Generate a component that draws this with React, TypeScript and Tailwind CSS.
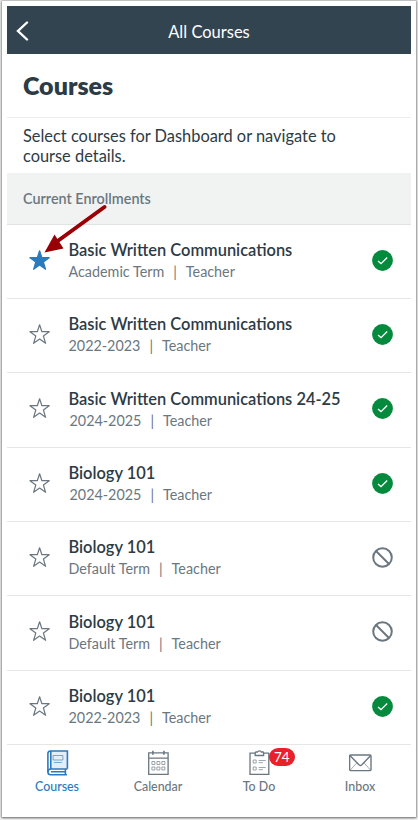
type Course = {
  name: string;
  term: string;
  published: boolean;
  favorite?: boolean;
  inset?: boolean;
};

const courses: Course[] = [
  { name: "Basic Written Communications", term: "Academic Term", published: true, favorite: true },
  { name: "Basic Written Communications", term: "2022-2023", published: true },
  { name: "Basic Written Communications 24-25", term: "2024-2025", published: true, inset: true },
  { name: "Biology 101", term: "2024-2025", published: true, inset: true },
  { name: "Biology 101", term: "Default Term", published: false },
  { name: "Biology 101", term: "Default Term", published: false },
  { name: "Biology 101", term: "2022-2023", published: true },
];

function Star({ filled }: { filled?: boolean }) {
  return (
    <svg
      className={filled ? "w-[22px] h-[22px] shrink-0 text-[#2b7abc]" : "w-[22px] h-[22px] shrink-0 text-[#6b7780]"}
      viewBox="-0.6 0.6 22 22"
      fill={filled ? "currentColor" : "none"}
      stroke="currentColor"
      strokeWidth="1.2"
      strokeLinejoin="round"
    >
      <path d="M11 1.4L13.3 8.3H20.6L14.8 12.6L17 19.9L11 15.6L5 19.9L7.2 12.6L1.4 8.3H8.7Z" />
    </svg>
  );
}

function Published() {
  return (
    <svg className="w-[21px] h-[21px] shrink-0" viewBox="0 0 21 21" fill="none">
      <circle cx="10.5" cy="10.5" r="10.4" fill="#048a3d" />
      <path d="M6 10.9L9 13.6L15.2 7.5" stroke="#fff" strokeWidth="1.3" />
    </svg>
  );
}

function Unpublished() {
  return (
    <svg className="w-[21px] h-[21px] shrink-0" viewBox="0 0 21 21" fill="none" stroke="#6b7780" strokeWidth="2">
      <circle cx="10.5" cy="10.5" r="9.3" />
      <path d="M4 4L17 17" />
    </svg>
  );
}

function CourseRow({ course }: { course: Course }) {
  return (
    <li className="flex h-[74.4px] items-start border-b border-[#e4e6e7] pl-[21px] pr-[18.5px]">
      <div className="mt-[25px]">
        <Star filled={course.favorite} />
      </div>
      <div className="ml-[18.5px] mt-[14.4px] flex-1 whitespace-nowrap">
        <h2 className="text-[16.43px] leading-[22px] font-semibold text-[#2d3b45]">{course.name}</h2>
        <p className={course.inset ? "flex pl-px text-[14.35px] leading-[22px] text-[#6b7780]" : "flex text-[14.35px] leading-[22px] text-[#6b7780]"}>
          <span>{course.term}</span>
          <span className="mx-[9px]">|</span>
          <span>Teacher</span>
        </p>
      </div>
      <div className="mt-[25px]">{course.published ? <Published /> : <Unpublished />}</div>
    </li>
  );
}

function BookIcon() {
  return (
    <svg className="w-[22px] h-[26px]" viewBox="0.6 0 22 26" fill="none" stroke="currentColor" strokeWidth="1.6">
      <path d="M4 1H21V19H5V1Z" fill="#e3eef7" stroke="none" />
      <path d="M21 18.8V1H4Q1.5 1.2 1.5 3.5V22Q1.5 24.7 4.3 24.7H20.5" />
      <path d="M4.4 1V19" strokeWidth="1.6" />
      <path d="M21 19H4.5Q1.5 19.2 1.5 21.8M19 19.5V24.5M4.5 21.8H18.5" />
      <path d="M6.7 5.5H16.5V10H6.7ZM7.5 12.5H15.5" strokeWidth="1" opacity=".6" />
    </svg>
  );
}

function CalendarIcon() {
  return (
    <svg className="w-[22px] h-[26px]" viewBox="0.6 0 22 26" fill="none" stroke="currentColor" strokeWidth="1.3">
      <path d="M1.3 2.8H20.7V24.4H1.3ZM1.3 8.2H20.7" />
      <path d="M5.5 .8V4.8M16.5 .8V4.8" strokeWidth="1.6" />
      <path
        d="M4.5 11.5H7.5V14.5H4.5ZM9.5 11.5H12.5V14.5H9.5ZM14.5 11.5H17.5V14.5H14.5ZM4.5 17H7.5V20H4.5ZM9.5 17H12.5V20H9.5ZM14.5 17H17.5V20H14.5Z"
        strokeWidth="1"
        opacity=".65"
      />
    </svg>
  );
}

function TodoIcon() {
  return (
    <svg className="w-[22px] h-[26px]" viewBox="0.6 0 22 26" fill="none" stroke="currentColor" strokeWidth="1.3">
      <path d="M7 3.2H1.6V24.4H20.4V3.2H15" />
      <path d="M6.8 5.5V2.8Q6.8 2 7.6 2H9Q9.5 .8 11 .8Q12.5 .8 13 2H14.4Q15.2 2 15.2 2.8V5.5Z" />
      <path d="M4.8 10H7.8V13H4.8ZM4.8 17H7.8V20H4.8ZM10.3 10.5H17.3M10.3 12.7H14.5M10.3 17.5H17.3M10.3 19.7H14.5" strokeWidth="1" opacity=".65" />
    </svg>
  );
}

function InboxIcon() {
  return (
    <svg className="w-[24px] h-[26px]" viewBox="0.6 0 24 26" fill="none" stroke="currentColor" strokeWidth="1.4">
      <rect x="1.2" y="5" width="21.4" height="15.6" rx="1" />
      <path d="M1.5 5.5L10.8 15Q12 16 13.2 15L22.3 5.5" />
      <path d="M2 20L8.5 12.7M22 20L15.5 12.7" strokeWidth="1" opacity=".6" />
    </svg>
  );
}

const tabs = [
  { label: "Courses", icon: <BookIcon />, active: true },
  { label: "Calendar", icon: <CalendarIcon /> },
  { label: "To Do", icon: <TodoIcon />, badge: 74 },
  { label: "Inbox", icon: <InboxIcon /> },
];

export default function App() {
  return (
    <div className="h-[820px] w-[418px] bg-[#f4f4f4] pt-px pl-[2px] font-['Lato',sans-serif]">
      <div className="relative h-[816px] w-[414px] bg-white px-[5px] pt-[5px] shadow-[0_0_2px_1px_rgba(0,0,0,0.28),0_1px_2px_rgba(0,0,0,0.4)]">
        <header className="grid h-[48px] grid-cols-[1fr_auto_1fr] items-center bg-[#334451] text-white">
          <svg className="ml-[9px] mt-[2px] h-[20px] w-[14px]" viewBox="0 0 14 20" fill="none" stroke="currentColor" strokeWidth="2.4" strokeLinecap="round">
            <path d="M11 1.5L2 10L11 18.5" />
          </svg>
          <span className="pt-[5px] text-[16.5px]">All Courses</span>
        </header>

        <div className="h-[64px] border-b border-[#eceeee] pl-[16px] pt-[13px]">
          <h1 className="text-[25px] leading-[36px] font-extrabold text-[#2d3b45]">Courses</h1>
        </div>
        <p className="h-[55px] w-[350px] pl-[16px] pt-[8px] text-[16.4px] leading-[20px] text-[#2d3b45]">
          Select courses for Dashboard or navigate to course details.
        </p>
        <div className="h-[51.5px] border-b border-[#e1e4e4] bg-[#f1f3f3] pl-[16px] pt-[15px] text-[14.4px] leading-[22px] font-semibold text-[#6b7780]">
          Current Enrollments
        </div>

        <ul>
          {courses.map((course, i) => (
            <CourseRow key={i} course={course} />
          ))}
        </ul>

        <nav className="grid grid-cols-4">
          {tabs.map((tab) => (
            <div
              key={tab.label}
              className={tab.active ? "flex flex-col items-center pt-[5px] text-[#2b7abc]" : "flex flex-col items-center pt-[5px] text-[#6b7780]"}
            >
              <div className="relative">
                {tab.icon}
                {tab.badge && (
                  <span className="absolute -top-[2px] left-[20.5px] flex h-[18px] w-[25.5px] items-center justify-center rounded-full bg-[#e8212b] text-[13.5px] text-white">
                    {tab.badge}
                  </span>
                )}
              </div>
              <span className="mt-[3px] mr-px text-[12.4px] leading-[16px] font-medium">{tab.label}</span>
            </div>
          ))}
        </nav>

        {/* callout arrow pointing at the favorite star */}
        <svg className="absolute left-[40px] top-[202px] h-[52px] w-[66px]" viewBox="0 0 66 52" fill="#990005">
          <path d="M62.5 4L15 38.5" stroke="#990005" strokeWidth="4" strokeLinecap="round" />
          <path d="M2.5 49.5L12.5 31.5L21.5 45.5Z" />
        </svg>
      </div>
    </div>
  );
}
